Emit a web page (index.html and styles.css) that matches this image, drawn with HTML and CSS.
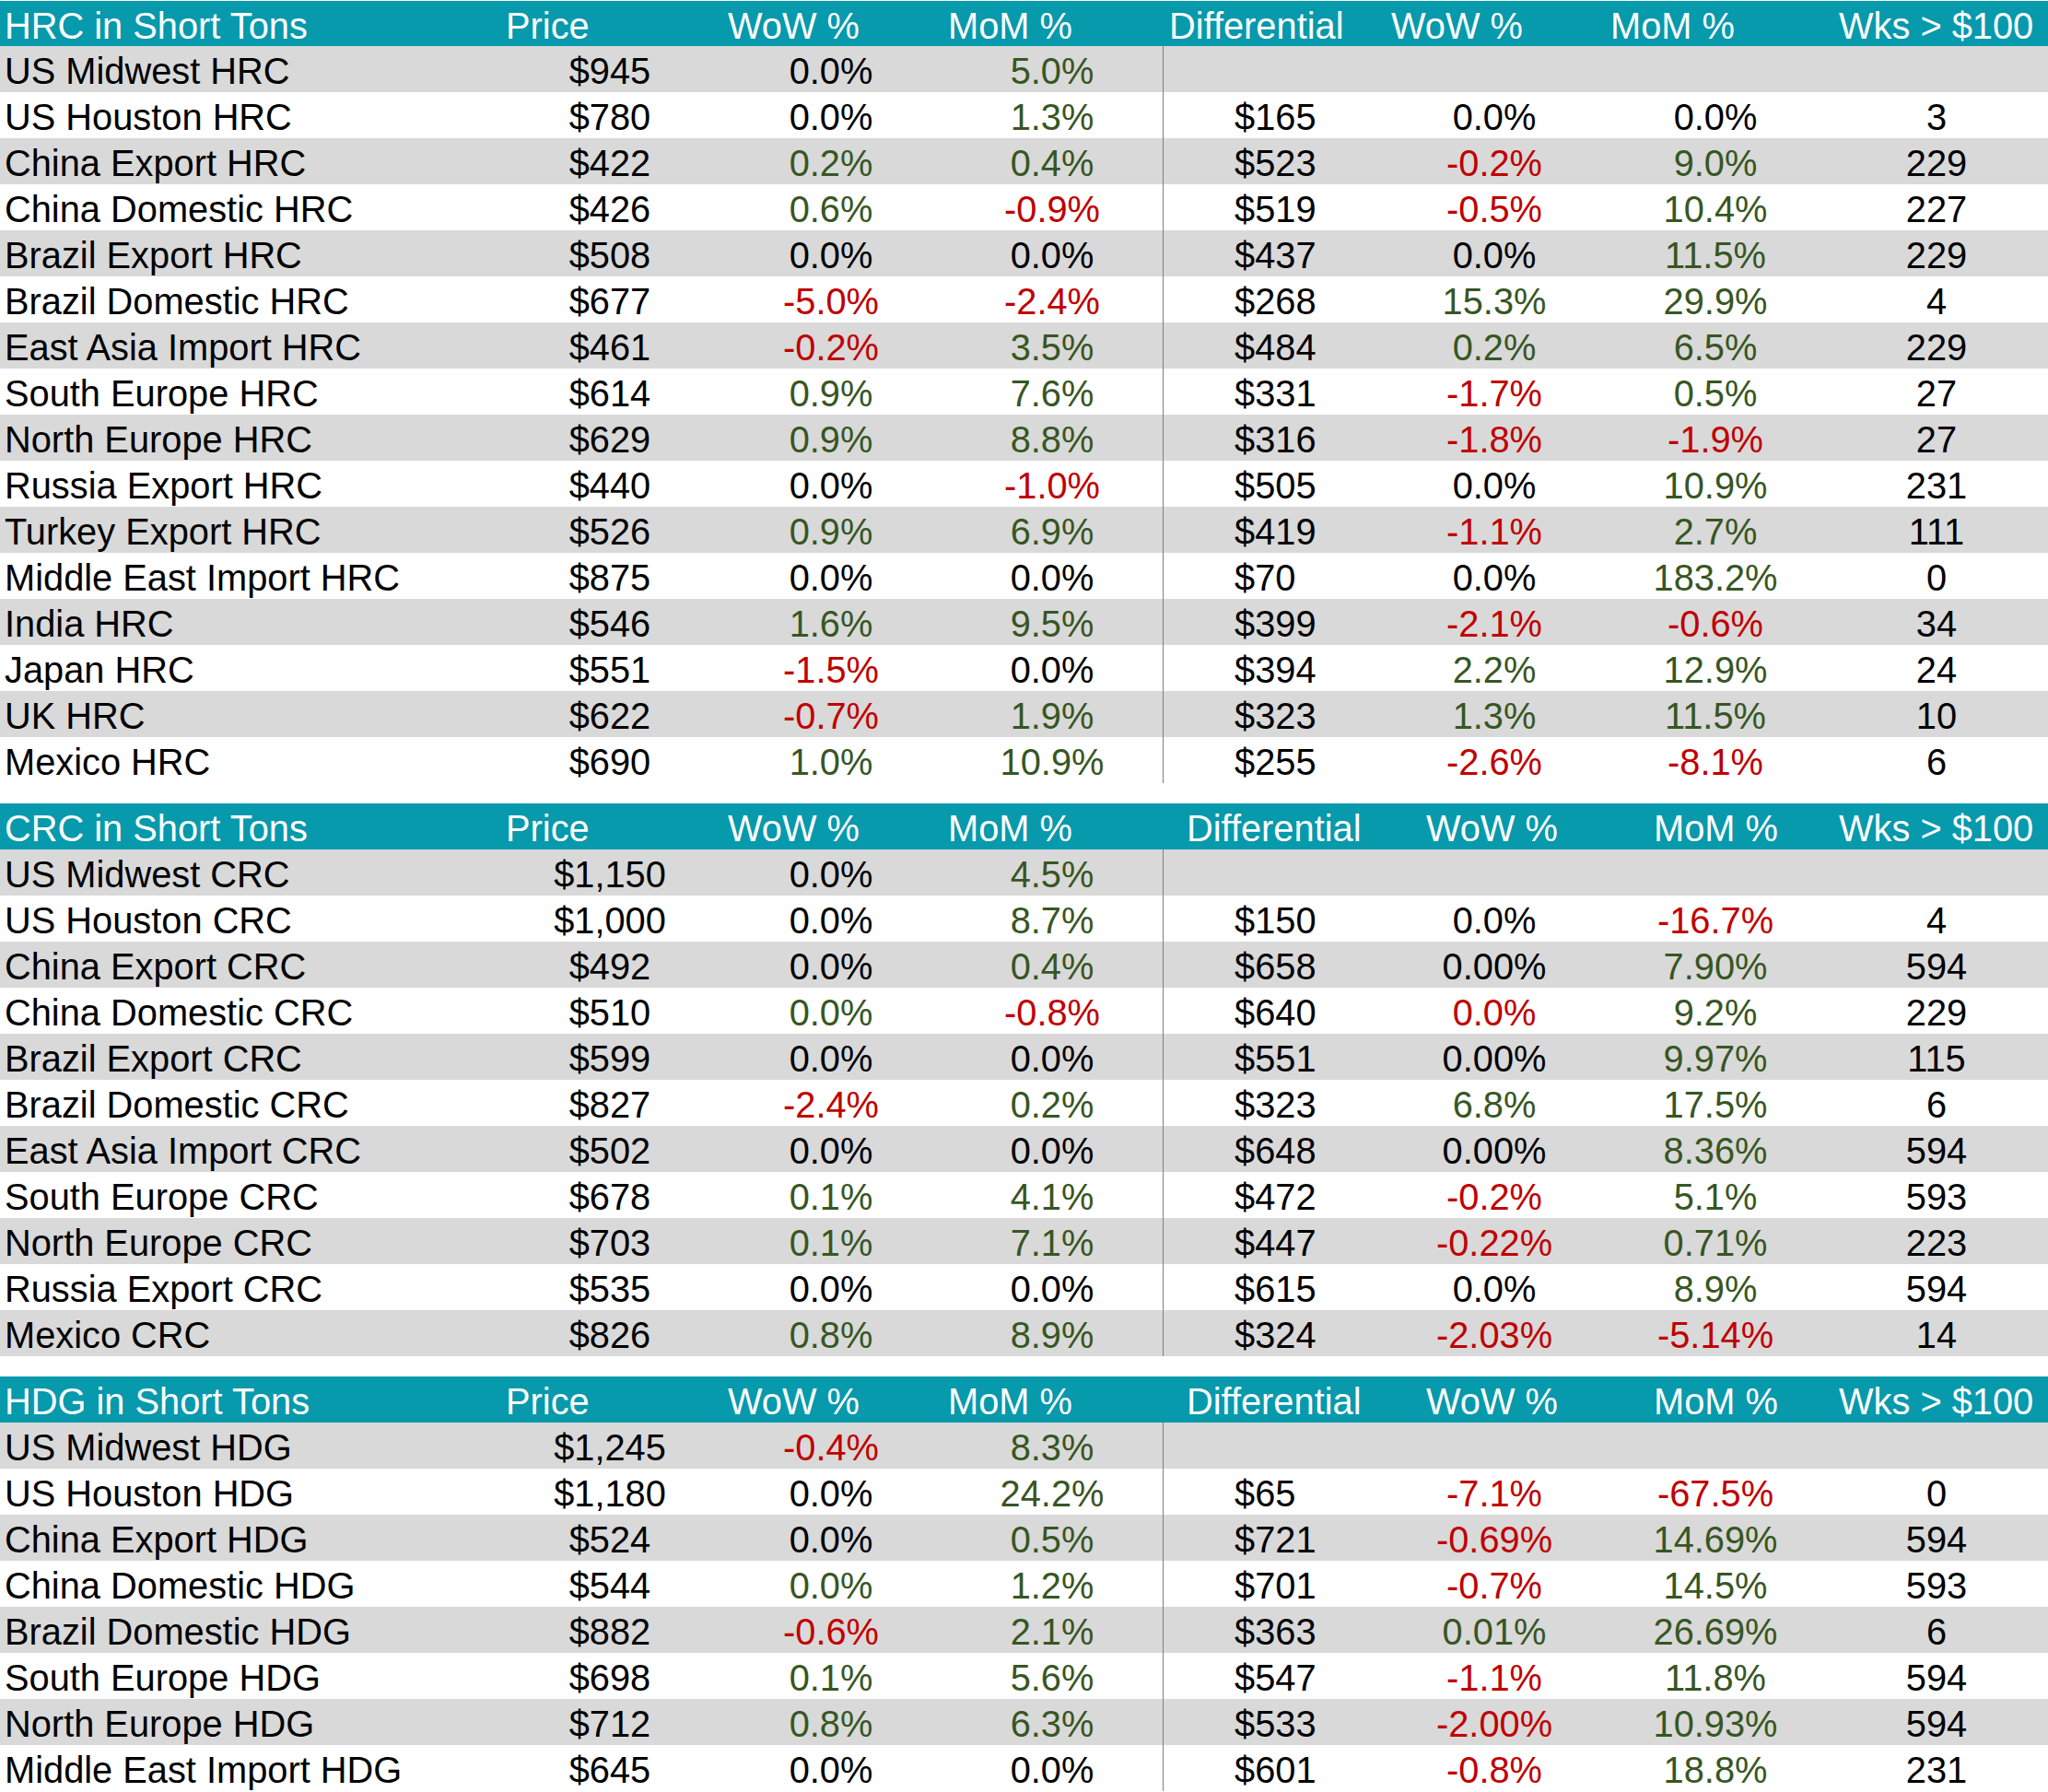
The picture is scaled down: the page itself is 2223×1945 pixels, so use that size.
FILE: index.html
```html
<!DOCTYPE html>
<html lang="en">
<head>
<meta charset="utf-8">
<title>Steel Prices in Short Tons</title>
<link rel="stylesheet" href="styles.css">
</head>
<body>
<div class="page">

  <section class="table table-first">
    <div class="row head">
      <div class="hc h-name">HRC in Short Tons</div>
      <div class="hc h-price">Price</div>
      <div class="hc h-wow">WoW %</div>
      <div class="hc h-mom">MoM %</div>
      <div class="hc h-diff">Differential</div>
      <div class="hc h-dwow">WoW %</div>
      <div class="hc h-dmom">MoM %</div>
      <div class="hc h-wks">Wks &gt; $100</div>
    </div>
    <div class="row odd"><div class="name">US Midwest HRC</div><div class="c">$945</div><div class="c">0.0%</div><div class="c g">5.0%</div><div class="diff"></div><div class="c"></div><div class="c"></div><div class="c"></div></div>
    <div class="row"><div class="name">US Houston HRC</div><div class="c">$780</div><div class="c">0.0%</div><div class="c g">1.3%</div><div class="diff">$165</div><div class="c">0.0%</div><div class="c">0.0%</div><div class="c">3</div></div>
    <div class="row odd"><div class="name">China Export HRC</div><div class="c">$422</div><div class="c g">0.2%</div><div class="c g">0.4%</div><div class="diff">$523</div><div class="c r">-0.2%</div><div class="c g">9.0%</div><div class="c">229</div></div>
    <div class="row"><div class="name">China Domestic HRC</div><div class="c">$426</div><div class="c g">0.6%</div><div class="c r">-0.9%</div><div class="diff">$519</div><div class="c r">-0.5%</div><div class="c g">10.4%</div><div class="c">227</div></div>
    <div class="row odd"><div class="name">Brazil Export HRC</div><div class="c">$508</div><div class="c">0.0%</div><div class="c">0.0%</div><div class="diff">$437</div><div class="c">0.0%</div><div class="c g">11.5%</div><div class="c">229</div></div>
    <div class="row"><div class="name">Brazil Domestic HRC</div><div class="c">$677</div><div class="c r">-5.0%</div><div class="c r">-2.4%</div><div class="diff">$268</div><div class="c g">15.3%</div><div class="c g">29.9%</div><div class="c">4</div></div>
    <div class="row odd"><div class="name">East Asia Import HRC</div><div class="c">$461</div><div class="c r">-0.2%</div><div class="c g">3.5%</div><div class="diff">$484</div><div class="c g">0.2%</div><div class="c g">6.5%</div><div class="c">229</div></div>
    <div class="row"><div class="name">South Europe HRC</div><div class="c">$614</div><div class="c g">0.9%</div><div class="c g">7.6%</div><div class="diff">$331</div><div class="c r">-1.7%</div><div class="c g">0.5%</div><div class="c">27</div></div>
    <div class="row odd"><div class="name">North Europe HRC</div><div class="c">$629</div><div class="c g">0.9%</div><div class="c g">8.8%</div><div class="diff">$316</div><div class="c r">-1.8%</div><div class="c r">-1.9%</div><div class="c">27</div></div>
    <div class="row"><div class="name">Russia Export HRC</div><div class="c">$440</div><div class="c">0.0%</div><div class="c r">-1.0%</div><div class="diff">$505</div><div class="c">0.0%</div><div class="c g">10.9%</div><div class="c">231</div></div>
    <div class="row odd"><div class="name">Turkey Export HRC</div><div class="c">$526</div><div class="c g">0.9%</div><div class="c g">6.9%</div><div class="diff">$419</div><div class="c r">-1.1%</div><div class="c g">2.7%</div><div class="c">111</div></div>
    <div class="row"><div class="name">Middle East Import HRC</div><div class="c">$875</div><div class="c">0.0%</div><div class="c">0.0%</div><div class="diff">$70</div><div class="c">0.0%</div><div class="c g">183.2%</div><div class="c">0</div></div>
    <div class="row odd"><div class="name">India HRC</div><div class="c">$546</div><div class="c g">1.6%</div><div class="c g">9.5%</div><div class="diff">$399</div><div class="c r">-2.1%</div><div class="c r">-0.6%</div><div class="c">34</div></div>
    <div class="row"><div class="name">Japan HRC</div><div class="c">$551</div><div class="c r">-1.5%</div><div class="c">0.0%</div><div class="diff">$394</div><div class="c g">2.2%</div><div class="c g">12.9%</div><div class="c">24</div></div>
    <div class="row odd"><div class="name">UK HRC</div><div class="c">$622</div><div class="c r">-0.7%</div><div class="c g">1.9%</div><div class="diff">$323</div><div class="c g">1.3%</div><div class="c g">11.5%</div><div class="c">10</div></div>
    <div class="row"><div class="name">Mexico HRC</div><div class="c">$690</div><div class="c g">1.0%</div><div class="c g">10.9%</div><div class="diff">$255</div><div class="c r">-2.6%</div><div class="c r">-8.1%</div><div class="c">6</div></div>
  </section>

  <section class="table table-alt">
    <div class="row head">
      <div class="hc h-name">CRC in Short Tons</div>
      <div class="hc h-price">Price</div>
      <div class="hc h-wow">WoW %</div>
      <div class="hc h-mom">MoM %</div>
      <div class="hc h-diff">Differential</div>
      <div class="hc h-dwow">WoW %</div>
      <div class="hc h-dmom">MoM %</div>
      <div class="hc h-wks">Wks &gt; $100</div>
    </div>
    <div class="row odd"><div class="name">US Midwest CRC</div><div class="c">$1,150</div><div class="c">0.0%</div><div class="c g">4.5%</div><div class="diff"></div><div class="c"></div><div class="c"></div><div class="c"></div></div>
    <div class="row"><div class="name">US Houston CRC</div><div class="c">$1,000</div><div class="c">0.0%</div><div class="c g">8.7%</div><div class="diff">$150</div><div class="c">0.0%</div><div class="c r">-16.7%</div><div class="c">4</div></div>
    <div class="row odd"><div class="name">China Export CRC</div><div class="c">$492</div><div class="c">0.0%</div><div class="c g">0.4%</div><div class="diff">$658</div><div class="c">0.00%</div><div class="c g">7.90%</div><div class="c">594</div></div>
    <div class="row"><div class="name">China Domestic CRC</div><div class="c">$510</div><div class="c g">0.0%</div><div class="c r">-0.8%</div><div class="diff">$640</div><div class="c r">0.0%</div><div class="c g">9.2%</div><div class="c">229</div></div>
    <div class="row odd"><div class="name">Brazil Export CRC</div><div class="c">$599</div><div class="c">0.0%</div><div class="c">0.0%</div><div class="diff">$551</div><div class="c">0.00%</div><div class="c g">9.97%</div><div class="c">115</div></div>
    <div class="row"><div class="name">Brazil Domestic CRC</div><div class="c">$827</div><div class="c r">-2.4%</div><div class="c g">0.2%</div><div class="diff">$323</div><div class="c g">6.8%</div><div class="c g">17.5%</div><div class="c">6</div></div>
    <div class="row odd"><div class="name">East Asia Import CRC</div><div class="c">$502</div><div class="c">0.0%</div><div class="c">0.0%</div><div class="diff">$648</div><div class="c">0.00%</div><div class="c g">8.36%</div><div class="c">594</div></div>
    <div class="row"><div class="name">South Europe CRC</div><div class="c">$678</div><div class="c g">0.1%</div><div class="c g">4.1%</div><div class="diff">$472</div><div class="c r">-0.2%</div><div class="c g">5.1%</div><div class="c">593</div></div>
    <div class="row odd"><div class="name">North Europe CRC</div><div class="c">$703</div><div class="c g">0.1%</div><div class="c g">7.1%</div><div class="diff">$447</div><div class="c r">-0.22%</div><div class="c g">0.71%</div><div class="c">223</div></div>
    <div class="row"><div class="name">Russia Export CRC</div><div class="c">$535</div><div class="c">0.0%</div><div class="c">0.0%</div><div class="diff">$615</div><div class="c">0.0%</div><div class="c g">8.9%</div><div class="c">594</div></div>
    <div class="row odd"><div class="name">Mexico CRC</div><div class="c">$826</div><div class="c g">0.8%</div><div class="c g">8.9%</div><div class="diff">$324</div><div class="c r">-2.03%</div><div class="c r">-5.14%</div><div class="c">14</div></div>
  </section>

  <section class="table table-alt">
    <div class="row head">
      <div class="hc h-name">HDG in Short Tons</div>
      <div class="hc h-price">Price</div>
      <div class="hc h-wow">WoW %</div>
      <div class="hc h-mom">MoM %</div>
      <div class="hc h-diff">Differential</div>
      <div class="hc h-dwow">WoW %</div>
      <div class="hc h-dmom">MoM %</div>
      <div class="hc h-wks">Wks &gt; $100</div>
    </div>
    <div class="row odd"><div class="name">US Midwest HDG</div><div class="c">$1,245</div><div class="c r">-0.4%</div><div class="c g">8.3%</div><div class="diff"></div><div class="c"></div><div class="c"></div><div class="c"></div></div>
    <div class="row"><div class="name">US Houston HDG</div><div class="c">$1,180</div><div class="c">0.0%</div><div class="c g">24.2%</div><div class="diff">$65</div><div class="c r">-7.1%</div><div class="c r">-67.5%</div><div class="c">0</div></div>
    <div class="row odd"><div class="name">China Export HDG</div><div class="c">$524</div><div class="c">0.0%</div><div class="c g">0.5%</div><div class="diff">$721</div><div class="c r">-0.69%</div><div class="c g">14.69%</div><div class="c">594</div></div>
    <div class="row"><div class="name">China Domestic HDG</div><div class="c">$544</div><div class="c g">0.0%</div><div class="c g">1.2%</div><div class="diff">$701</div><div class="c r">-0.7%</div><div class="c g">14.5%</div><div class="c">593</div></div>
    <div class="row odd"><div class="name">Brazil Domestic HDG</div><div class="c">$882</div><div class="c r">-0.6%</div><div class="c g">2.1%</div><div class="diff">$363</div><div class="c g">0.01%</div><div class="c g">26.69%</div><div class="c">6</div></div>
    <div class="row"><div class="name">South Europe HDG</div><div class="c">$698</div><div class="c g">0.1%</div><div class="c g">5.6%</div><div class="diff">$547</div><div class="c r">-1.1%</div><div class="c g">11.8%</div><div class="c">594</div></div>
    <div class="row odd"><div class="name">North Europe HDG</div><div class="c">$712</div><div class="c g">0.8%</div><div class="c g">6.3%</div><div class="diff">$533</div><div class="c r">-2.00%</div><div class="c g">10.93%</div><div class="c">594</div></div>
    <div class="row"><div class="name">Middle East Import HDG</div><div class="c">$645</div><div class="c">0.0%</div><div class="c">0.0%</div><div class="diff">$601</div><div class="c r">-0.8%</div><div class="c g">18.8%</div><div class="c">231</div></div>
  </section>

</div>
</body>
</html>
```

FILE: styles.css
```css
html, body {
  margin: 0;
  padding: 0;
  background: #ffffff;
}

body {
  font-family: "Liberation Sans", Arial, sans-serif;
  font-size: 39.8px;
  color: #000000;
}

.page {
  width: 2223px;
  padding-top: 1px;
}

.table + .table {
  margin-top: 22px;
}

.row {
  display: grid;
  grid-template-columns: 542px repeat(7, 240px);
  height: 50px;
  background: #ffffff;
}

.row.odd {
  background: #d9d9d9;
}

.row > div {
  box-sizing: border-box;
  height: 50px;
  padding-top: 4px;
  line-height: 46px;
  white-space: nowrap;
  overflow: visible;
}

.head {
  background: #0799ac;
  color: #ffffff;
}

.table-first .head {
  height: 49px;
}

.table-first .head > div {
  height: 49px;
}

.name {
  padding-left: 5px;
}

.c {
  text-align: center;
}

.diff {
  border-left: 1px solid #7f7f7f;
  padding-left: 77px;
  text-align: left;
}

.g { color: #375623; }
.r { color: #c00000; }

/* header label offsets within their columns */
.h-name  { padding-left: 5px; }
.h-price { padding-left: 7px; }
.h-wow   { padding-left: 8px; }
.h-mom   { padding-left: 7px; }
.h-diff  { padding-left: 7px; }
.h-dwow  { padding-left: 8px; }
.h-dmom  { padding-left: 6px; }
.h-wks   { padding-left: 14px; }

.table-alt .h-diff { padding-left: 26px; }
.table-alt .h-dwow { padding-left: 46px; }
.table-alt .h-dmom { padding-left: 53px; }
```
